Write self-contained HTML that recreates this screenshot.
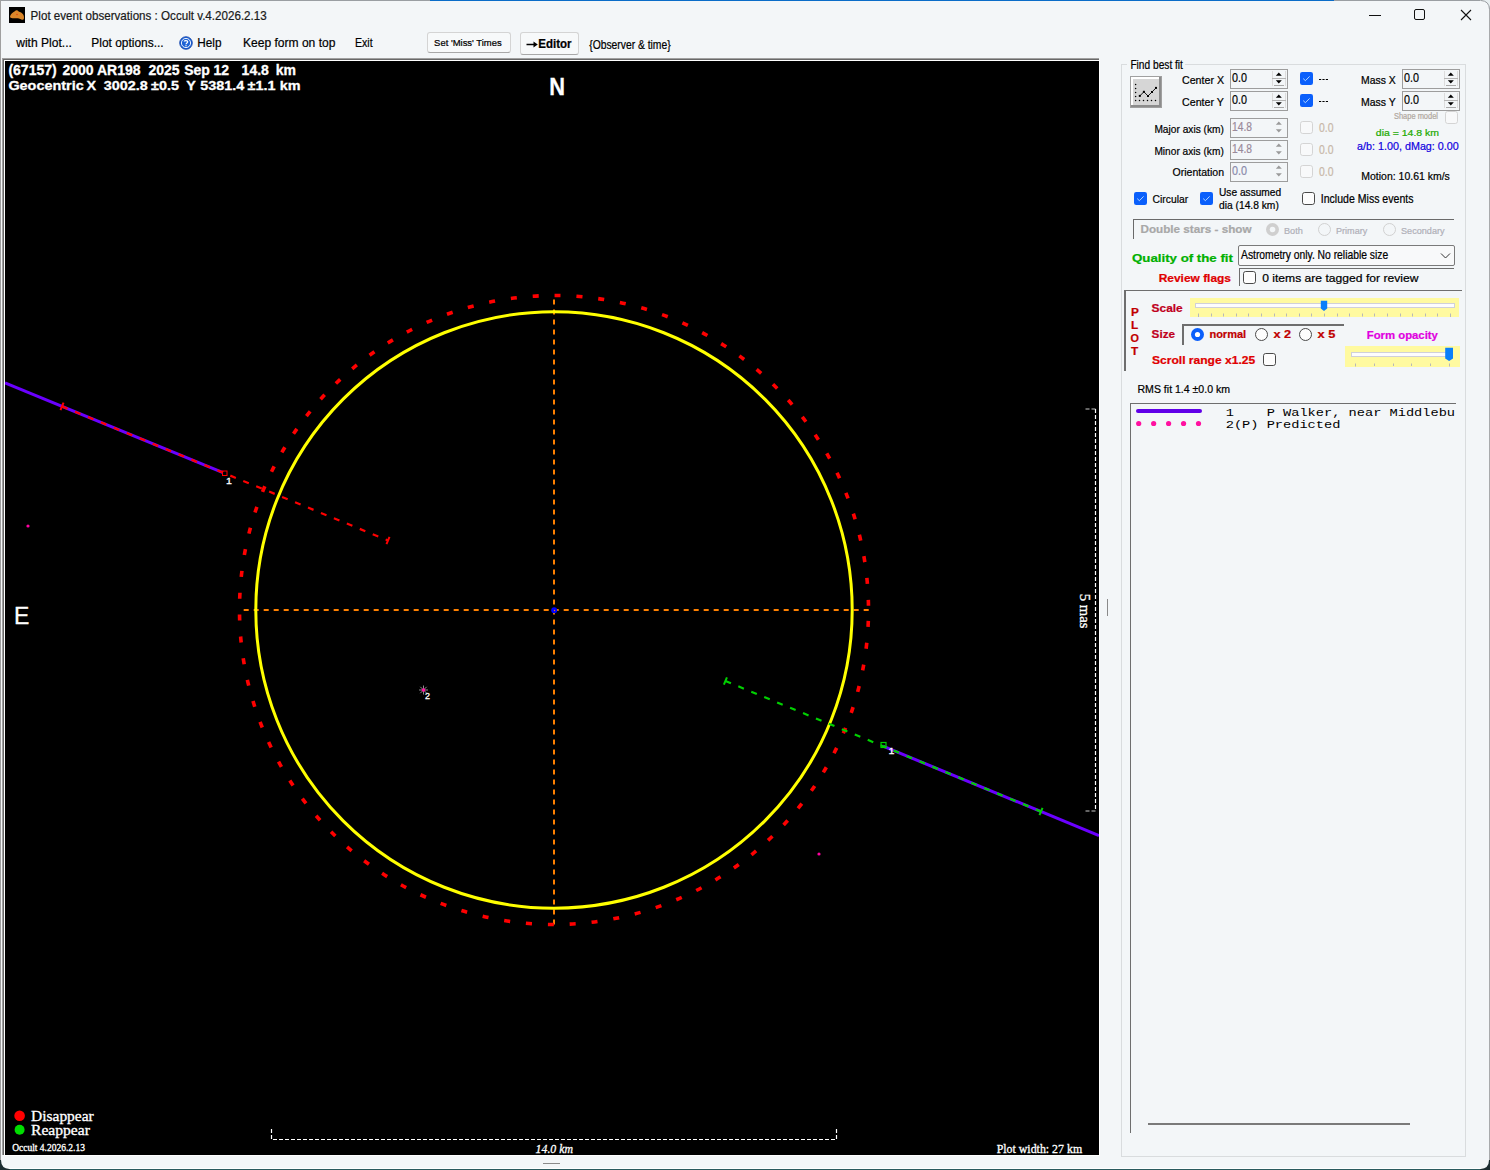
<!DOCTYPE html>
<html><head><meta charset="utf-8">
<style>
html,body{margin:0;padding:0;}
body{width:1490px;height:1170px;overflow:hidden;position:relative;background:#f3f6f8;font-family:"Liberation Sans",sans-serif;color:#000;}
.a{position:absolute;white-space:pre;line-height:1;}
.sv{position:absolute;left:0;top:0;}
</style></head><body>
<!-- window frame -->
<div class="a" style="left:0;top:0;width:1490px;height:1px;background:#9a9ea2"></div>
<div class="a" style="left:430px;top:0;width:904px;height:1px;background:#0a6cc8"></div>
<div class="a" style="left:0;top:0;width:1px;height:1170px;background:#a0a0a0"></div>
<div class="a" style="left:1489px;top:0;width:1px;height:1170px;background:#a8aaac"></div>
<div class="a" style="left:0;top:1168px;width:1490px;height:1px;background:#ffffff"></div>
<div class="a" style="left:0;top:1169px;width:1490px;height:1px;background:#2a5a5e"></div>


<svg class="sv" style="left:9px;top:7px" width="16" height="16" viewBox="0 0 16 16">
<rect width="16" height="16" fill="#000"/>
<path d="M1 9.8 C1.3 7.2 3.8 5.2 5.8 4.2 C7 3 8.6 3.1 9.6 4.4 C11.2 4.9 13.2 5.6 14.2 7.6 C15.1 9.2 15.3 11.1 14.6 12.6 C13.2 13.1 11.6 12.2 10.1 11.5 C8.2 11 5.6 11.3 3.5 11.2 C2 11.1 1 10.7 1 9.8 Z" fill="#d9862a"/><circle cx="8" cy="7.5" r="0.8" fill="#e04010"/>
</svg>
<svg class="sv" width="1490" height="30">
<line x1="1369" y1="15.5" x2="1381" y2="15.5" stroke="#111" stroke-width="1"/>
<rect x="1414.5" y="9.5" width="10" height="10" rx="1.5" fill="none" stroke="#111" stroke-width="1"/>
<path d="M1461 10 L1471 20 M1471 10 L1461 20" stroke="#111" stroke-width="1.1"/>
</svg>
<svg class="sv" style="left:179px;top:36px" width="14" height="14" viewBox="0 0 14 14">
<circle cx="7" cy="7" r="6.3" fill="#1d63d6" stroke="#0c3ea6" stroke-width="0.8"/>
<circle cx="7" cy="7" r="4.6" fill="none" stroke="#fff" stroke-width="0.9"/>
<path d="M5.3 5.6 C5.3 4.3 8.7 4.3 8.7 5.8 C8.7 6.9 7 7 7 8.3" fill="none" stroke="#fff" stroke-width="1.3"/>
<rect x="6.4" y="9.1" width="1.2" height="1.2" fill="#fff"/>
</svg>
<div class="a" style="left:427px;top:32px;width:82px;height:19px;border:1px solid #d4d4d4;border-bottom-color:#a8a8a8;border-radius:3px;background:#f7f9fa"></div>
<div class="a" style="left:520px;top:32px;width:57px;height:21px;border:1px solid #d4d4d4;border-bottom-color:#a8a8a8;border-radius:3px;background:#f7f9fa"></div>
<svg class="sv" style="left:526px;top:40px" width="13" height="9" viewBox="0 0 13 9"><path d="M0.5 4.5 H9" stroke="#000" stroke-width="1.5"/><path d="M7.5 1.6 L11.8 4.5 L7.5 7.4 Z" fill="#000"/></svg>
<div class="a" style="left:2px;top:58px;width:1097px;height:1px;background:#a0a0a0"></div>
<div class="a" style="left:2px;top:58px;width:1px;height:1097px;background:#a0a0a0"></div>
<div class="a" style="left:3px;top:59px;width:1096px;height:1px;background:#696969"></div>
<div class="a" style="left:3px;top:59px;width:1px;height:1096px;background:#696969"></div>
<div class="a" style="left:4px;top:60px;width:1096px;height:1096px;background:#fff"></div>
<div class="a" style="left:5px;top:61px;width:1094px;height:1094px;background:#000"></div>
<svg class="sv" width="1490" height="1170" style="left:0;top:0"><defs><clipPath id="pc"><rect x="5" y="61" width="1094" height="1094"/></clipPath></defs><g clip-path="url(#pc)">
<line x1="554.00" y1="299.40" x2="554.00" y2="925.00" stroke="#ff8000" stroke-width="2" stroke-dasharray="5 5"/>
<line x1="243.70" y1="610.00" x2="869.00" y2="610.00" stroke="#ff8000" stroke-width="2" stroke-dasharray="5 5"/>
<circle cx="554" cy="610" r="314.5" fill="none" stroke="#ff0000" stroke-width="3.6" stroke-dasharray="6 15.956" stroke-dashoffset="11"/>
<circle cx="554" cy="610" r="298.2" fill="none" stroke="#ffff00" stroke-width="3"/>
<line x1="5.00" y1="382.90" x2="223.00" y2="472.61" stroke="#6a00ff" stroke-width="3"/>
<line x1="62.00" y1="406.36" x2="388.00" y2="540.50" stroke="#ff0000" stroke-width="2.2" stroke-dasharray="6 8"/>
<line x1="63.52" y1="402.66" x2="60.48" y2="410.05" stroke="#ff0000" stroke-width="2"/>
<line x1="389.52" y1="536.81" x2="386.48" y2="544.20" stroke="#ff0000" stroke-width="2"/>
<rect x="222.5" y="471" width="4.5" height="4.5" fill="none" stroke="#ff0000" stroke-width="1"/>
<line x1="883.00" y1="746.18" x2="1099.00" y2="835.52" stroke="#6a00ff" stroke-width="3"/>
<line x1="725.40" y1="681.00" x2="1041.00" y2="811.53" stroke="#00d000" stroke-width="2.2" stroke-dasharray="6 8"/>
<line x1="726.93" y1="677.30" x2="723.87" y2="684.70" stroke="#00d000" stroke-width="2"/>
<line x1="1042.53" y1="807.84" x2="1039.47" y2="815.23" stroke="#00d000" stroke-width="2"/>
<rect x="881" y="742.5" width="5" height="5" fill="none" stroke="#00d000" stroke-width="1.2"/>
<circle cx="28" cy="526" r="1.6" fill="#ff00a0"/>
<circle cx="819" cy="854" r="1.6" fill="#ff00a0"/>
<line x1="419.00" y1="690.00" x2="428.00" y2="690.00" stroke="#9a9a9a" stroke-width="0.9"/>
<line x1="420.32" y1="686.82" x2="426.68" y2="693.18" stroke="#9a9a9a" stroke-width="0.9"/>
<line x1="423.50" y1="685.50" x2="423.50" y2="694.50" stroke="#9a9a9a" stroke-width="0.9"/>
<line x1="426.68" y1="686.82" x2="420.32" y2="693.18" stroke="#9a9a9a" stroke-width="0.9"/>
<circle cx="423.5" cy="690" r="1.8" fill="#ff10a0"/>
<circle cx="554.2" cy="610.2" r="3" fill="#0000ff"/><circle cx="554.5" cy="610.5" r="0.7" fill="#ff8000"/>
<path d="M271.5 1129 V1139.5 H836.5 V1129" fill="none" stroke="#fff" stroke-width="1.2" stroke-dasharray="4 2"/>
<path d="M1095.5 409 V811" fill="none" stroke="#fff" stroke-width="1.2" stroke-dasharray="4 2"/>
<path d="M1085.5 409 H1096 M1085.5 811 H1096" fill="none" stroke="#c8c8c8" stroke-width="1.2" stroke-dasharray="4 2"/>
<text x="0" y="0" font-family="Liberation Sans" font-size="14.00" fill="#ffffff" font-weight="bold" stroke="#ffffff" stroke-width="0.3" transform="translate(8.40 74.90) scale(1.000 1)" xml:space="preserve">(67157)</text>
<text x="0" y="0" font-family="Liberation Sans" font-size="14.00" fill="#ffffff" font-weight="bold" stroke="#ffffff" stroke-width="0.3" transform="translate(62.40 74.90) scale(1.000 1)" xml:space="preserve">2000</text>
<text x="0" y="0" font-family="Liberation Sans" font-size="14.00" fill="#ffffff" font-weight="bold" stroke="#ffffff" stroke-width="0.3" transform="translate(97.00 74.90) scale(1.000 1)" xml:space="preserve">AR198</text>
<text x="0" y="0" font-family="Liberation Sans" font-size="14.00" fill="#ffffff" font-weight="bold" stroke="#ffffff" stroke-width="0.3" transform="translate(148.50 74.90) scale(1.000 1)" xml:space="preserve">2025</text>
<text x="0" y="0" font-family="Liberation Sans" font-size="14.00" fill="#ffffff" font-weight="bold" stroke="#ffffff" stroke-width="0.3" transform="translate(184.20 74.90) scale(1.000 1)" xml:space="preserve">Sep</text>
<text x="0" y="0" font-family="Liberation Sans" font-size="14.00" fill="#ffffff" font-weight="bold" stroke="#ffffff" stroke-width="0.3" transform="translate(213.40 74.90) scale(1.000 1)" xml:space="preserve">12</text>
<text x="0" y="0" font-family="Liberation Sans" font-size="14.00" fill="#ffffff" font-weight="bold" stroke="#ffffff" stroke-width="0.3" transform="translate(241.60 74.90) scale(1.000 1)" xml:space="preserve">14.8</text>
<text x="0" y="0" font-family="Liberation Sans" font-size="14.00" fill="#ffffff" font-weight="bold" stroke="#ffffff" stroke-width="0.3" transform="translate(275.80 74.90) scale(1.000 1)" xml:space="preserve">km</text>
<text x="0" y="0" font-family="Liberation Sans" font-size="13.60" fill="#ffffff" font-weight="bold" stroke="#ffffff" stroke-width="0.3" transform="translate(8.40 90.20) scale(1.060 1)" xml:space="preserve">Geocentric</text>
<text x="0" y="0" font-family="Liberation Sans" font-size="13.60" fill="#ffffff" font-weight="bold" stroke="#ffffff" stroke-width="0.3" transform="translate(86.50 90.20) scale(1.060 1)" xml:space="preserve">X</text>
<text x="0" y="0" font-family="Liberation Sans" font-size="13.60" fill="#ffffff" font-weight="bold" stroke="#ffffff" stroke-width="0.3" transform="translate(103.70 90.20) scale(1.060 1)" xml:space="preserve">3002.8</text>
<text x="0" y="0" font-family="Liberation Sans" font-size="13.60" fill="#ffffff" font-weight="bold" stroke="#ffffff" stroke-width="0.3" transform="translate(151.00 90.20) scale(1.060 1)" xml:space="preserve">±0.5</text>
<text x="0" y="0" font-family="Liberation Sans" font-size="13.60" fill="#ffffff" font-weight="bold" stroke="#ffffff" stroke-width="0.3" transform="translate(186.20 90.20) scale(1.060 1)" xml:space="preserve">Y</text>
<text x="0" y="0" font-family="Liberation Sans" font-size="13.60" fill="#ffffff" font-weight="bold" stroke="#ffffff" stroke-width="0.3" transform="translate(200.30 90.20) scale(1.060 1)" xml:space="preserve">5381.4</text>
<text x="0" y="0" font-family="Liberation Sans" font-size="13.60" fill="#ffffff" font-weight="bold" stroke="#ffffff" stroke-width="0.3" transform="translate(247.60 90.20) scale(1.060 1)" xml:space="preserve">±1.1</text>
<text x="0" y="0" font-family="Liberation Sans" font-size="13.60" fill="#ffffff" font-weight="bold" stroke="#ffffff" stroke-width="0.3" transform="translate(279.80 90.20) scale(1.060 1)" xml:space="preserve">km</text>
<text x="0" y="0" font-family="Liberation Sans" font-size="24.28" fill="#ffffff" font-weight="bold" stroke="#ffffff" stroke-width="0.3" transform="translate(549.30 95.00) scale(0.898 1)" xml:space="preserve">N</text>
<text x="0" y="0" font-family="Liberation Sans" font-size="24.28" fill="#ffffff" stroke="#ffffff" stroke-width="0.3" transform="translate(13.90 624.00) scale(0.948 1)" xml:space="preserve">E</text>
<text x="0" y="0" font-family="Liberation Sans" font-size="9.20" fill="#ffffff" stroke="#ffffff" stroke-width="0.3" transform="translate(226.10 483.90) scale(1.155 1)" xml:space="preserve">1</text>
<text x="0" y="0" font-family="Liberation Sans" font-size="9.20" fill="#ffffff" stroke="#ffffff" stroke-width="0.3" transform="translate(888.50 753.90) scale(1.155 1)" xml:space="preserve">1</text>
<text x="0" y="0" font-family="Liberation Sans" font-size="9.64" fill="#ffffff" stroke="#ffffff" stroke-width="0.3" transform="translate(425.00 699.00) scale(0.935 1)" xml:space="preserve">2</text>
<circle cx="19.6" cy="1115.7" r="5.3" fill="#ff0000"/>
<circle cx="19.6" cy="1129.7" r="5" fill="#00dd00"/>
<text x="0" y="0" font-family="Liberation Serif" font-size="14.89" fill="#ffffff" stroke="#ffffff" stroke-width="0.3" transform="translate(31.00 1121.00) scale(1.040 1)" xml:space="preserve">Disappear</text>
<text x="0" y="0" font-family="Liberation Serif" font-size="14.12" fill="#ffffff" stroke="#ffffff" stroke-width="0.3" transform="translate(31.00 1134.90) scale(1.105 1)" xml:space="preserve">Reappear</text>
<text x="0" y="0" font-family="Liberation Serif" font-size="9.47" fill="#ffffff" stroke="#ffffff" stroke-width="0.3" transform="translate(12.20 1150.60) scale(1.003 1)" xml:space="preserve">Occult 4.2026.2.13</text>
<text x="0" y="0" font-family="Liberation Serif" font-size="12.95" fill="#ffffff" stroke="#ffffff" stroke-width="0.3" font-style="italic" transform="translate(535.60 1152.90) scale(0.912 1)" xml:space="preserve">14.0 km</text>
<text x="0" y="0" font-family="Liberation Serif" font-size="12.60" fill="#ffffff" stroke="#ffffff" stroke-width="0.3" transform="translate(996.70 1152.70) scale(0.943 1)" xml:space="preserve">Plot width: 27 km</text>
<text x="0" y="0" font-size="14.7" font-family="Liberation Serif" fill="#fff" stroke="#fff" stroke-width="0.3" transform="translate(1079.5 593.8) rotate(90)">5 mas</text>
</g></svg>
<div class="a" style="left:1107px;top:599px;width:1px;height:17px;background:#8a8a8a"></div>
<div class="a" style="left:543px;top:1163px;width:17px;height:1px;background:#8a8a8a"></div>
<div class="a" style="left:1121px;top:64px;width:343px;height:1091px;border:1px solid #d9dcde;"></div>
<div class="a" style="left:1127px;top:57px;width:58px;height:14px;background:#f3f6f8"></div>
<svg class="sv" style="left:1130px;top:76px" width="32" height="32" viewBox="0 0 32 32">
<rect x="0" y="0" width="32" height="32" fill="#a0a0a0"/>
<rect x="1" y="1" width="30" height="30" fill="#8c8c8c"/>
<rect x="1" y="1" width="28" height="28" fill="#ffffff"/>
<rect x="3" y="3" width="26" height="26" fill="#d6d6d6"/>
<g fill="#000">
<circle cx="5.6" cy="8.5" r="0.75"/><circle cx="5.6" cy="12.4" r="0.75"/><circle cx="5.6" cy="16.5" r="0.75"/><circle cx="5.6" cy="20.4" r="0.75"/><circle cx="5.6" cy="24.4" r="0.75"/>
<circle cx="9.5" cy="24.4" r="0.75"/><circle cx="13.5" cy="24.4" r="0.75"/><circle cx="17.5" cy="24.4" r="0.75"/><circle cx="21.5" cy="24.4" r="0.75"/><circle cx="25.5" cy="24.4" r="0.75"/>
<rect x="8.8" y="18.9" width="2" height="2"/><rect x="12.9" y="14.8" width="2" height="2"/><rect x="17" y="19" width="2" height="2"/><rect x="21" y="15" width="2" height="2"/><rect x="25" y="10.9" width="2" height="2"/>
</g>
<polyline points="9.8,19.9 13.9,15.8 18,20 22,16 26,11.9" fill="none" stroke="#000" stroke-width="0.9"/>
</svg>
<div class="a" style="left:1230px;top:69px;width:56px;height:18px;border:1px solid #9d9d9d;"></div>
<svg class="sv" style="left:1272px;top:71px" width="14" height="16" viewBox="0 0 14 16"><line x1="2" y1="14.5" x2="12" y2="14.5" stroke="#a8a8a8"/><line x1="0.5" y1="0" x2="0.5" y2="15" stroke="#dcdcdc"/><line x1="13.5" y1="0" x2="13.5" y2="15" stroke="#dcdcdc"/><line x1="0" y1="7.5" x2="14" y2="7.5" stroke="#b4b4b4"/>
<path d="M3.8 4.8 L6.8 1.4 L9.8 4.8 Z" fill="#000"/>
<path d="M3.8 9.2 L9.8 9.2 L6.8 12.6 Z" fill="#000"/>
</svg>
<svg class="sv" style="left:1300px;top:72px" width="13" height="13" viewBox="0 0 13 13">
<rect x="0" y="0" width="13" height="13" rx="2.2" fill="#0a5ffb"/>
<path d="M3.2 6.6 L5.4 8.7 L9.6 4.4" fill="none" stroke="#d8f0ff" stroke-width="0.8"/></svg>
<div class="a" style="left:1402px;top:69px;width:56px;height:18px;border:1px solid #9d9d9d;"></div>
<svg class="sv" style="left:1444px;top:71px" width="14" height="16" viewBox="0 0 14 16"><line x1="2" y1="14.5" x2="12" y2="14.5" stroke="#a8a8a8"/><line x1="0.5" y1="0" x2="0.5" y2="15" stroke="#dcdcdc"/><line x1="13.5" y1="0" x2="13.5" y2="15" stroke="#dcdcdc"/><line x1="0" y1="7.5" x2="14" y2="7.5" stroke="#b4b4b4"/>
<path d="M3.8 4.8 L6.8 1.4 L9.8 4.8 Z" fill="#000"/>
<path d="M3.8 9.2 L9.8 9.2 L6.8 12.6 Z" fill="#000"/>
</svg>
<div class="a" style="left:1230px;top:91px;width:56px;height:18px;border:1px solid #9d9d9d;"></div>
<svg class="sv" style="left:1272px;top:93px" width="14" height="16" viewBox="0 0 14 16"><line x1="2" y1="14.5" x2="12" y2="14.5" stroke="#a8a8a8"/><line x1="0.5" y1="0" x2="0.5" y2="15" stroke="#dcdcdc"/><line x1="13.5" y1="0" x2="13.5" y2="15" stroke="#dcdcdc"/><line x1="0" y1="7.5" x2="14" y2="7.5" stroke="#b4b4b4"/>
<path d="M3.8 4.8 L6.8 1.4 L9.8 4.8 Z" fill="#000"/>
<path d="M3.8 9.2 L9.8 9.2 L6.8 12.6 Z" fill="#000"/>
</svg>
<svg class="sv" style="left:1300px;top:94px" width="13" height="13" viewBox="0 0 13 13">
<rect x="0" y="0" width="13" height="13" rx="2.2" fill="#0a5ffb"/>
<path d="M3.2 6.6 L5.4 8.7 L9.6 4.4" fill="none" stroke="#d8f0ff" stroke-width="0.8"/></svg>
<div class="a" style="left:1402px;top:91px;width:56px;height:18px;border:1px solid #9d9d9d;"></div>
<svg class="sv" style="left:1444px;top:93px" width="14" height="16" viewBox="0 0 14 16"><line x1="2" y1="14.5" x2="12" y2="14.5" stroke="#a8a8a8"/><line x1="0.5" y1="0" x2="0.5" y2="15" stroke="#dcdcdc"/><line x1="13.5" y1="0" x2="13.5" y2="15" stroke="#dcdcdc"/><line x1="0" y1="7.5" x2="14" y2="7.5" stroke="#b4b4b4"/>
<path d="M3.8 4.8 L6.8 1.4 L9.8 4.8 Z" fill="#000"/>
<path d="M3.8 9.2 L9.8 9.2 L6.8 12.6 Z" fill="#000"/>
</svg>
<svg class="sv" style="left:1445px;top:111px" width="13" height="13" viewBox="0 0 13 13">
<rect x="0.5" y="0.5" width="12" height="12" rx="2.2" fill="#f8f9fa" stroke="#d4d4d4" stroke-width="1"/></svg>
<div class="a" style="left:1230px;top:118px;width:56px;height:18px;border:1px solid #9d9d9d;"></div>
<svg class="sv" style="left:1272px;top:120px" width="14" height="16" viewBox="0 0 14 16">
<path d="M3.8 4.8 L6.8 1.4 L9.8 4.8 Z" fill="#9a9a9a"/>
<path d="M3.8 9.2 L9.8 9.2 L6.8 12.6 Z" fill="#9a9a9a"/>
</svg>
<div class="a" style="left:1230px;top:140px;width:56px;height:18px;border:1px solid #9d9d9d;"></div>
<svg class="sv" style="left:1272px;top:142px" width="14" height="16" viewBox="0 0 14 16">
<path d="M3.8 4.8 L6.8 1.4 L9.8 4.8 Z" fill="#9a9a9a"/>
<path d="M3.8 9.2 L9.8 9.2 L6.8 12.6 Z" fill="#9a9a9a"/>
</svg>
<div class="a" style="left:1230px;top:162px;width:56px;height:18px;border:1px solid #9d9d9d;"></div>
<svg class="sv" style="left:1272px;top:164px" width="14" height="16" viewBox="0 0 14 16">
<path d="M3.8 4.8 L6.8 1.4 L9.8 4.8 Z" fill="#9a9a9a"/>
<path d="M3.8 9.2 L9.8 9.2 L6.8 12.6 Z" fill="#9a9a9a"/>
</svg>
<svg class="sv" style="left:1300px;top:121px" width="13" height="13" viewBox="0 0 13 13">
<rect x="0.5" y="0.5" width="12" height="12" rx="2.2" fill="#f8f9fa" stroke="#d4d4d4" stroke-width="1"/></svg>
<svg class="sv" style="left:1300px;top:143px" width="13" height="13" viewBox="0 0 13 13">
<rect x="0.5" y="0.5" width="12" height="12" rx="2.2" fill="#f8f9fa" stroke="#d4d4d4" stroke-width="1"/></svg>
<svg class="sv" style="left:1300px;top:165px" width="13" height="13" viewBox="0 0 13 13">
<rect x="0.5" y="0.5" width="12" height="12" rx="2.2" fill="#f8f9fa" stroke="#d4d4d4" stroke-width="1"/></svg>
<svg class="sv" style="left:1134px;top:192px" width="13" height="13" viewBox="0 0 13 13">
<rect x="0" y="0" width="13" height="13" rx="2.2" fill="#0a5ffb"/>
<path d="M3.2 6.6 L5.4 8.7 L9.6 4.4" fill="none" stroke="#d8f0ff" stroke-width="0.8"/></svg>
<svg class="sv" style="left:1200px;top:192px" width="13" height="13" viewBox="0 0 13 13">
<rect x="0" y="0" width="13" height="13" rx="2.2" fill="#0a5ffb"/>
<path d="M3.2 6.6 L5.4 8.7 L9.6 4.4" fill="none" stroke="#d8f0ff" stroke-width="0.8"/></svg>
<svg class="sv" style="left:1302px;top:192px" width="13" height="13" viewBox="0 0 13 13">
<rect x="0.5" y="0.5" width="12" height="12" rx="2.2" fill="#fdfdfd" stroke="#4a4a4a" stroke-width="1"/></svg>
<div class="a" style="left:1132.5px;top:218.5px;width:321px;height:1.6px;background:#6a6a6a"></div>
<div class="a" style="left:1132.5px;top:218.5px;width:1.6px;height:20px;background:#6a6a6a"></div>
<svg class="sv" style="left:1266px;top:223px" width="13" height="13" viewBox="0 0 13 13">
<circle cx="6.5" cy="6.5" r="6.5" fill="#cfcfcf"/><circle cx="6.5" cy="6.5" r="2.8" fill="#f3f6f8"/></svg>
<svg class="sv" style="left:1318px;top:223px" width="13" height="13" viewBox="0 0 13 13">
<circle cx="6.5" cy="6.5" r="6" fill="none" stroke="#d0d0d0" stroke-width="1"/></svg>
<svg class="sv" style="left:1383px;top:223px" width="13" height="13" viewBox="0 0 13 13">
<circle cx="6.5" cy="6.5" r="6" fill="none" stroke="#d0d0d0" stroke-width="1"/></svg>
<div class="a" style="left:1238px;top:245px;width:215px;height:19px;border:1px solid #7a7a7a;border-radius:2px;background:#f8f9fa"></div>
<svg class="sv" style="left:1440px;top:252px" width="11" height="8" viewBox="0 0 11 8"><path d="M1 1.5 L5.5 6 L10 1.5" fill="none" stroke="#333" stroke-width="1"/></svg>
<div class="a" style="left:1238.5px;top:268px;width:215px;height:1.2px;background:#6e6e6e"></div>
<div class="a" style="left:1238.5px;top:268px;width:1.2px;height:18px;background:#6e6e6e"></div>
<svg class="sv" style="left:1243px;top:271px" width="13" height="13" viewBox="0 0 13 13">
<rect x="0.5" y="0.5" width="12" height="12" rx="2.2" fill="#fdfdfd" stroke="#4a4a4a" stroke-width="1"/></svg>
<div class="a" style="left:1124px;top:289.5px;width:337.5px;height:1.5px;background:#6e6e6e"></div>
<div class="a" style="left:1124px;top:289.5px;width:1.5px;height:81px;background:#6e6e6e"></div>
<div class="a" style="left:1190px;top:298px;width:269px;height:19px;background:#fffaa0"></div>
<div class="a" style="left:1195px;top:303px;width:258px;height:3px;background:#fdfdfd;border:0.7px solid #d0d0d8"></div>
<svg class="sv" style="left:1190px;top:298px" width="270" height="20"><line x1="8.5" y1="15.5" x2="8.5" y2="19" stroke="#b8b8b8" stroke-width="1"/><line x1="21.5" y1="15.5" x2="21.5" y2="18.5" stroke="#b8b8b8" stroke-width="1"/><line x1="33.5" y1="15.5" x2="33.5" y2="18.5" stroke="#b8b8b8" stroke-width="1"/><line x1="46.5" y1="15.5" x2="46.5" y2="18.5" stroke="#b8b8b8" stroke-width="1"/><line x1="58.5" y1="15.5" x2="58.5" y2="18.5" stroke="#b8b8b8" stroke-width="1"/><line x1="71.5" y1="15.5" x2="71.5" y2="18.5" stroke="#b8b8b8" stroke-width="1"/><line x1="84.5" y1="15.5" x2="84.5" y2="18.5" stroke="#b8b8b8" stroke-width="1"/><line x1="96.5" y1="15.5" x2="96.5" y2="18.5" stroke="#b8b8b8" stroke-width="1"/><line x1="109.5" y1="15.5" x2="109.5" y2="18.5" stroke="#b8b8b8" stroke-width="1"/><line x1="121.5" y1="15.5" x2="121.5" y2="18.5" stroke="#b8b8b8" stroke-width="1"/><line x1="134.5" y1="15.5" x2="134.5" y2="18.5" stroke="#b8b8b8" stroke-width="1"/><line x1="147.5" y1="15.5" x2="147.5" y2="18.5" stroke="#b8b8b8" stroke-width="1"/><line x1="159.5" y1="15.5" x2="159.5" y2="18.5" stroke="#b8b8b8" stroke-width="1"/><line x1="172.5" y1="15.5" x2="172.5" y2="18.5" stroke="#b8b8b8" stroke-width="1"/><line x1="184.5" y1="15.5" x2="184.5" y2="18.5" stroke="#b8b8b8" stroke-width="1"/><line x1="197.5" y1="15.5" x2="197.5" y2="18.5" stroke="#b8b8b8" stroke-width="1"/><line x1="210.5" y1="15.5" x2="210.5" y2="18.5" stroke="#b8b8b8" stroke-width="1"/><line x1="222.5" y1="15.5" x2="222.5" y2="18.5" stroke="#b8b8b8" stroke-width="1"/><line x1="235.5" y1="15.5" x2="235.5" y2="18.5" stroke="#b8b8b8" stroke-width="1"/><line x1="247.5" y1="15.5" x2="247.5" y2="18.5" stroke="#b8b8b8" stroke-width="1"/><line x1="260.5" y1="15.5" x2="260.5" y2="19" stroke="#b8b8b8" stroke-width="1"/><path d="M130.8 2.7 H137.2 V10.5 L134 13 L130.8 10.5 Z" fill="#0a7ffa"/></svg>
<div class="a" style="left:1182px;top:324px;width:162px;height:1.5px;background:#6e6e6e"></div>
<div class="a" style="left:1182px;top:324px;width:1.5px;height:21px;background:#6e6e6e"></div>
<svg class="sv" style="left:1191px;top:328px" width="13" height="13" viewBox="0 0 13 13">
<circle cx="6.5" cy="6.5" r="6.5" fill="#0a5ffb"/><circle cx="6.5" cy="6.5" r="2.6" fill="#fff"/></svg>
<svg class="sv" style="left:1255px;top:328px" width="13" height="13" viewBox="0 0 13 13">
<circle cx="6.5" cy="6.5" r="6" fill="#fdfdfd" stroke="#4a4a4a" stroke-width="1"/></svg>
<svg class="sv" style="left:1299px;top:328px" width="13" height="13" viewBox="0 0 13 13">
<circle cx="6.5" cy="6.5" r="6" fill="#fdfdfd" stroke="#4a4a4a" stroke-width="1"/></svg>
<svg class="sv" style="left:1263px;top:353px" width="13" height="13" viewBox="0 0 13 13">
<rect x="0.5" y="0.5" width="12" height="12" rx="2.2" fill="#fdfdfd" stroke="#4a4a4a" stroke-width="1"/></svg>
<div class="a" style="left:1345px;top:346px;width:115px;height:21px;background:#fffaa0"></div>
<div class="a" style="left:1351px;top:352px;width:95px;height:3px;background:#fdfdfd;border:0.7px solid #d0d0d8"></div>
<svg class="sv" style="left:1345px;top:346px" width="115" height="21"><line x1="10.5" y1="17.5" x2="10.5" y2="20.5" stroke="#b8b8b8" stroke-width="1"/><line x1="29.5" y1="17.5" x2="29.5" y2="20" stroke="#b8b8b8" stroke-width="1"/><line x1="48.5" y1="17.5" x2="48.5" y2="20" stroke="#b8b8b8" stroke-width="1"/><line x1="66.5" y1="17.5" x2="66.5" y2="20" stroke="#b8b8b8" stroke-width="1"/><line x1="85.5" y1="17.5" x2="85.5" y2="20" stroke="#b8b8b8" stroke-width="1"/><line x1="104.5" y1="17.5" x2="104.5" y2="20.5" stroke="#b8b8b8" stroke-width="1"/><path d="M100.2 1.8 H108 V12.5 L104.1 15 L100.2 12.5 Z" fill="#0a7ffa"/></svg>
<div class="a" style="left:1129.5px;top:402.5px;width:326px;height:1.5px;background:#6e6e6e"></div>
<div class="a" style="left:1129.5px;top:402.5px;width:1.5px;height:730px;background:#6e6e6e"></div>
<div class="a" style="left:1135.5px;top:408.8px;width:66.5px;height:4px;background:#6000e8;border-radius:2px"></div>
<svg class="sv" style="left:1130px;top:415px" width="80" height="16"><circle cx="8.70" cy="8.5" r="2.6" fill="#ff10a0"/><circle cx="23.65" cy="8.5" r="2.6" fill="#ff10a0"/><circle cx="38.60" cy="8.5" r="2.6" fill="#ff10a0"/><circle cx="53.55" cy="8.5" r="2.6" fill="#ff10a0"/><circle cx="68.50" cy="8.5" r="2.6" fill="#ff10a0"/></svg>
<div class="a" style="left:1148px;top:1122.5px;width:262px;height:2px;background:#7a7a7a"></div>
<svg class="sv" width="1490" height="1170" style="left:0;top:0;pointer-events:none">
<text x="0" y="0" font-family="Liberation Sans" font-size="12.39" fill="#1a1a1a" stroke="#1a1a1a" stroke-width="0.22" transform="translate(30.60 19.70) scale(0.939 1)" xml:space="preserve">Plot event observations : Occult v.4.2026.2.13</text>
<text x="0" y="0" font-family="Liberation Sans" font-size="13.26" fill="#000" stroke="#000" stroke-width="0.22" transform="translate(16.16 47.30) scale(0.912 1)" xml:space="preserve">with Plot...</text>
<text x="0" y="0" font-family="Liberation Sans" font-size="13.26" fill="#000" stroke="#000" stroke-width="0.22" transform="translate(91.30 47.30) scale(0.902 1)" xml:space="preserve">Plot options...</text>
<text x="0" y="0" font-family="Liberation Sans" font-size="13.26" fill="#000" stroke="#000" stroke-width="0.22" transform="translate(197.30 47.30) scale(0.888 1)" xml:space="preserve">Help</text>
<text x="0" y="0" font-family="Liberation Sans" font-size="13.26" fill="#000" stroke="#000" stroke-width="0.22" transform="translate(243.00 47.30) scale(0.910 1)" xml:space="preserve">Keep form on top</text>
<text x="0" y="0" font-family="Liberation Sans" font-size="13.26" fill="#000" stroke="#000" stroke-width="0.22" transform="translate(355.00 47.30) scale(0.797 1)" xml:space="preserve">Exit</text>
<text x="0" y="0" font-family="Liberation Sans" font-size="9.64" fill="#000" stroke="#000" stroke-width="0.22" transform="translate(434.10 46.10) scale(0.981 1)" xml:space="preserve">Set &#x27;Miss&#x27; Times</text>
<text x="0" y="0" font-family="Liberation Sans" font-size="11.96" fill="#000" font-weight="bold" stroke="#000" stroke-width="0.22" transform="translate(538.30 47.70) scale(0.964 1)" xml:space="preserve">Editor</text>
<text x="0" y="0" font-family="Liberation Sans" font-size="12.07" fill="#000" stroke="#000" stroke-width="0.22" transform="translate(589.20 48.80) scale(0.856 1)" xml:space="preserve">{Observer &amp; time}</text>
<text x="0" y="0" font-family="Liberation Sans" font-size="12.39" fill="#000" stroke="#000" stroke-width="0.22" transform="translate(1130.40 68.90) scale(0.821 1)" xml:space="preserve">Find best fit</text>
<text x="0" y="0" font-family="Liberation Sans" font-size="11.38" fill="#000" stroke="#000" stroke-width="0.22" transform="translate(1182.00 83.70) scale(0.936 1)" xml:space="preserve">Center X</text>
<text x="0" y="0" font-family="Liberation Sans" font-size="13.21" fill="#000" stroke="#000" stroke-width="0.22" transform="translate(1232.00 82.20) scale(0.817 1)" xml:space="preserve">0.0</text>
<path d="M1319 79.5 h2.2 M1322.4 79.5 h2.2 M1325.8 79.5 h2.2" stroke="#000" stroke-width="1.1"/>
<text x="0" y="0" font-family="Liberation Sans" font-size="10.65" fill="#000" stroke="#000" stroke-width="0.22" transform="translate(1361.00 84.00) scale(0.977 1)" xml:space="preserve">Mass X</text>
<text x="0" y="0" font-family="Liberation Sans" font-size="13.21" fill="#000" stroke="#000" stroke-width="0.22" transform="translate(1404.00 82.20) scale(0.817 1)" xml:space="preserve">0.0</text>
<text x="0" y="0" font-family="Liberation Sans" font-size="11.38" fill="#000" stroke="#000" stroke-width="0.22" transform="translate(1182.00 105.70) scale(0.939 1)" xml:space="preserve">Center Y</text>
<text x="0" y="0" font-family="Liberation Sans" font-size="13.21" fill="#000" stroke="#000" stroke-width="0.22" transform="translate(1232.00 104.20) scale(0.817 1)" xml:space="preserve">0.0</text>
<path d="M1319 101.5 h2.2 M1322.4 101.5 h2.2 M1325.8 101.5 h2.2" stroke="#000" stroke-width="1.1"/>
<text x="0" y="0" font-family="Liberation Sans" font-size="10.65" fill="#000" stroke="#000" stroke-width="0.22" transform="translate(1361.00 106.00) scale(0.983 1)" xml:space="preserve">Mass Y</text>
<text x="0" y="0" font-family="Liberation Sans" font-size="13.21" fill="#000" stroke="#000" stroke-width="0.22" transform="translate(1404.00 104.20) scale(0.817 1)" xml:space="preserve">0.0</text>
<text x="0" y="0" font-family="Liberation Sans" font-size="8.19" fill="#b0a8a0" stroke="#b0a8a0" stroke-width="0.22" transform="translate(1394.00 119.00) scale(0.912 1)" xml:space="preserve">Shape model</text>
<text x="0" y="0" font-family="Liberation Sans" font-size="11.52" fill="#000" stroke="#000" stroke-width="0.22" transform="translate(1154.40 132.60) scale(0.883 1)" xml:space="preserve">Major axis (km)</text>
<text x="0" y="0" font-family="Liberation Sans" font-size="13.21" fill="#9a8a9a" stroke="#9a8a9a" stroke-width="0.22" transform="translate(1232.00 131.20) scale(0.778 1)" xml:space="preserve">14.8</text>
<text x="0" y="0" font-family="Liberation Sans" font-size="11.81" fill="#000" stroke="#000" stroke-width="0.22" transform="translate(1154.40 154.70) scale(0.861 1)" xml:space="preserve">Minor axis (km)</text>
<text x="0" y="0" font-family="Liberation Sans" font-size="13.21" fill="#9a8a9a" stroke="#9a8a9a" stroke-width="0.22" transform="translate(1232.00 153.20) scale(0.778 1)" xml:space="preserve">14.8</text>
<text x="0" y="0" font-family="Liberation Sans" font-size="11.67" fill="#000" stroke="#000" stroke-width="0.22" transform="translate(1172.50 175.80) scale(0.903 1)" xml:space="preserve">Orientation</text>
<text x="0" y="0" font-family="Liberation Sans" font-size="13.21" fill="#8a8aaa" stroke="#8a8aaa" stroke-width="0.22" transform="translate(1232.00 175.20) scale(0.817 1)" xml:space="preserve">0.0</text>
<text x="0" y="0" font-family="Liberation Sans" font-size="12.07" fill="#c8b8a8" stroke="#c8b8a8" stroke-width="0.22" transform="translate(1319.00 132.20) scale(0.864 1)" xml:space="preserve">0.0</text>
<text x="0" y="0" font-family="Liberation Sans" font-size="12.07" fill="#c8b8a8" stroke="#c8b8a8" stroke-width="0.22" transform="translate(1319.00 154.20) scale(0.864 1)" xml:space="preserve">0.0</text>
<text x="0" y="0" font-family="Liberation Sans" font-size="12.07" fill="#c8b8a8" stroke="#c8b8a8" stroke-width="0.22" transform="translate(1319.00 176.20) scale(0.864 1)" xml:space="preserve">0.0</text>
<text x="0" y="0" font-family="Liberation Sans" font-size="9.93" fill="#22aa00" stroke="#22aa00" stroke-width="0.22" transform="translate(1375.80 135.50) scale(1.056 1)" xml:space="preserve">dia = 14.8 km</text>
<text x="0" y="0" font-family="Liberation Sans" font-size="11.81" fill="#1000e0" stroke="#1000e0" stroke-width="0.22" transform="translate(1357.00 150.00) scale(0.913 1)" xml:space="preserve">a/b: 1.00, dMag: 0.00</text>
<text x="0" y="0" font-family="Liberation Sans" font-size="11.52" fill="#000" stroke="#000" stroke-width="0.22" transform="translate(1361.30 180.00) scale(0.911 1)" xml:space="preserve">Motion: 10.61 km/s</text>
<text x="0" y="0" font-family="Liberation Sans" font-size="11.67" fill="#000" stroke="#000" stroke-width="0.22" transform="translate(1152.60 203.00) scale(0.888 1)" xml:space="preserve">Circular</text>
<text x="0" y="0" font-family="Liberation Sans" font-size="10.07" fill="#000" stroke="#000" stroke-width="0.22" transform="translate(1219.00 195.80) scale(1.011 1)" xml:space="preserve">Use assumed</text>
<text x="0" y="0" font-family="Liberation Sans" font-size="10.94" fill="#000" stroke="#000" stroke-width="0.22" transform="translate(1219.00 208.50) scale(0.938 1)" xml:space="preserve">dia (14.8 km)</text>
<text x="0" y="0" font-family="Liberation Sans" font-size="12.10" fill="#000" stroke="#000" stroke-width="0.22" transform="translate(1320.80 202.70) scale(0.873 1)" xml:space="preserve">Include Miss events</text>
<text x="0" y="0" font-family="Liberation Sans" font-size="11.38" fill="#a8a8a8" font-weight="bold" stroke="#a8a8a8" stroke-width="0.22" transform="translate(1140.50 232.70) scale(1.028 1)" xml:space="preserve">Double stars - show</text>
<text x="0" y="0" font-family="Liberation Sans" font-size="9.64" fill="#b0b0b8" stroke="#b0b0b8" stroke-width="0.22" transform="translate(1284.00 234.00) scale(0.949 1)" xml:space="preserve">Both</text>
<text x="0" y="0" font-family="Liberation Sans" font-size="9.64" fill="#b0b0b8" stroke="#b0b0b8" stroke-width="0.22" transform="translate(1336.00 234.00) scale(0.943 1)" xml:space="preserve">Primary</text>
<text x="0" y="0" font-family="Liberation Sans" font-size="9.64" fill="#b0b0b8" stroke="#b0b0b8" stroke-width="0.22" transform="translate(1401.00 234.00) scale(0.946 1)" xml:space="preserve">Secondary</text>
<text x="0" y="0" font-family="Liberation Sans" font-size="11.09" fill="#00b000" font-weight="bold" stroke="#00b000" stroke-width="0.22" transform="translate(1132.00 262.00) scale(1.197 1)" xml:space="preserve">Quality of the fit</text>
<text x="0" y="0" font-family="Liberation Sans" font-size="11.96" fill="#000" stroke="#000" stroke-width="0.22" transform="translate(1241.00 258.90) scale(0.864 1)" xml:space="preserve">Astrometry only. No reliable size</text>
<text x="0" y="0" font-family="Liberation Sans" font-size="11.38" fill="#e00000" font-weight="bold" stroke="#e00000" stroke-width="0.22" transform="translate(1158.70 281.60) scale(1.049 1)" xml:space="preserve">Review flags</text>
<text x="0" y="0" font-family="Liberation Sans" font-size="11.64" fill="#000" stroke="#000" stroke-width="0.22" transform="translate(1262.20 281.50) scale(1.041 1)" xml:space="preserve">0 items are tagged for review</text>
<text x="0" y="0" font-family="Liberation Sans" font-size="11.81" fill="#c00000" font-weight="bold" stroke="#c00000" stroke-width="0.22" transform="translate(1131.00 315.80) scale(1.000 1)" xml:space="preserve">P</text>
<text x="0" y="0" font-family="Liberation Sans" font-size="11.81" fill="#c00000" font-weight="bold" stroke="#c00000" stroke-width="0.22" transform="translate(1131.00 328.50) scale(1.000 1)" xml:space="preserve">L</text>
<text x="0" y="0" font-family="Liberation Sans" font-size="10.80" fill="#c00000" font-weight="bold" stroke="#c00000" stroke-width="0.22" transform="translate(1130.50 341.80) scale(1.000 1)" xml:space="preserve">O</text>
<text x="0" y="0" font-family="Liberation Sans" font-size="11.81" fill="#c00000" font-weight="bold" stroke="#c00000" stroke-width="0.22" transform="translate(1131.00 354.50) scale(1.000 1)" xml:space="preserve">T</text>
<text x="0" y="0" font-family="Liberation Sans" font-size="11.81" fill="#c00020" font-weight="bold" stroke="#c00020" stroke-width="0.22" transform="translate(1151.60 311.60) scale(1.010 1)" xml:space="preserve">Scale</text>
<text x="0" y="0" font-family="Liberation Sans" font-size="11.23" fill="#c00020" font-weight="bold" stroke="#c00020" stroke-width="0.22" transform="translate(1151.60 337.80) scale(1.042 1)" xml:space="preserve">Size</text>
<text x="0" y="0" font-family="Liberation Sans" font-size="10.69" fill="#c00000" font-weight="bold" stroke="#c00000" stroke-width="0.22" transform="translate(1209.40 337.80) scale(1.032 1)" xml:space="preserve">normal</text>
<text x="0" y="0" font-family="Liberation Sans" font-size="11.07" fill="#c00000" font-weight="bold" stroke="#c00000" stroke-width="0.22" transform="translate(1273.40 338.00) scale(1.144 1)" xml:space="preserve">x 2</text>
<text x="0" y="0" font-family="Liberation Sans" font-size="11.23" fill="#c00000" font-weight="bold" stroke="#c00000" stroke-width="0.22" transform="translate(1317.50 338.00) scale(1.140 1)" xml:space="preserve">x 5</text>
<text x="0" y="0" font-family="Liberation Sans" font-size="11.23" fill="#e000e0" font-weight="bold" stroke="#e000e0" stroke-width="0.22" transform="translate(1366.70 338.80) scale(1.011 1)" xml:space="preserve">Form opacity</text>
<text x="0" y="0" font-family="Liberation Sans" font-size="11.23" fill="#e00000" font-weight="bold" stroke="#e00000" stroke-width="0.22" transform="translate(1152.00 363.80) scale(1.074 1)" xml:space="preserve">Scroll range x1.25</text>
<text x="0" y="0" font-family="Liberation Sans" font-size="11.67" fill="#000" stroke="#000" stroke-width="0.22" transform="translate(1137.50 392.70) scale(0.905 1)" xml:space="preserve">RMS fit 1.4 ±0.0 km</text>
<text x="0" y="0" font-family="Liberation Mono" font-size="11.59" fill="#000" transform="translate(1225.70 416.00) scale(1.179 1)" xml:space="preserve">1    P Walker, near Middlebu</text>
<text x="0" y="0" font-family="Liberation Mono" font-size="11.59" fill="#000" transform="translate(1225.70 427.8) scale(1.179 1)" xml:space="preserve">2(P) Predicted</text>
</svg>
<svg class="sv" width="1490" height="1170" style="left:0;top:0"><path d="M0 1160 V1170 H10 L9.5 1169 Q1 1168.5 1 1160 Z" fill="#1c2c30"/><path d="M1490 1160 V1170 H1480 L1480.5 1169 Q1489 1168.5 1489 1160 Z" fill="#1c2c30"/><path d="M1480 0 H1490 V10 Q1489.5 1 1480.5 0.5 Z" fill="#e8eef0"/><path d="M1481 0.5 Q1489.3 1 1489.5 9.5" fill="none" stroke="#9a9ea2" stroke-width="1"/></svg>
</body></html>
